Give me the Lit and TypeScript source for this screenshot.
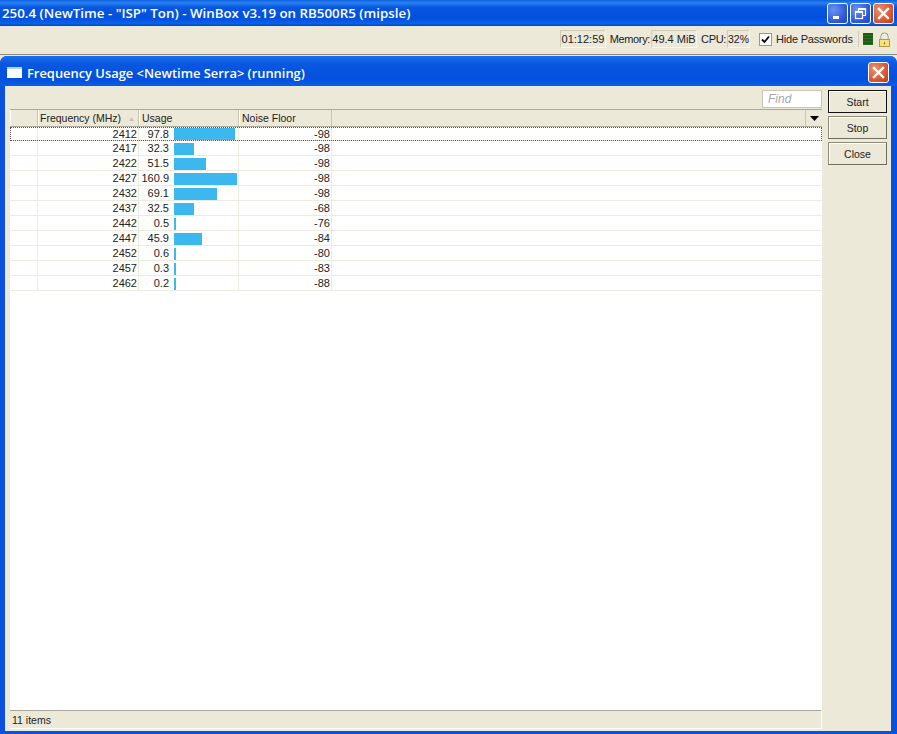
import { LitElement, html, css, svg } from "lit";
import { customElement } from "lit/decorators.js";

const ROWS: [string, string, number, string][] = [
  ["2412", "97.8", 61, "-98"],
  ["2417", "32.3", 20, "-98"],
  ["2422", "51.5", 32, "-98"],
  ["2427", "160.9", 63, "-98"],
  ["2432", "69.1", 43, "-98"],
  ["2437", "32.5", 20, "-68"],
  ["2442", "0.5", 2, "-76"],
  ["2447", "45.9", 28, "-84"],
  ["2452", "0.6", 2, "-80"],
  ["2457", "0.3", 2, "-83"],
  ["2462", "0.2", 2, "-88"],
];

const xIcon = svg`<svg width="13" height="13" viewBox="0 0 13 13"><path d="M2 2 L11 11 M11 2 L2 11" stroke="#fff" stroke-width="2.4" stroke-linecap="square"/></svg>`;

@customElement("app-root")
export class AppRoot extends LitElement {
  static styles = css`
    :host { display: flex; flex-direction: column; width: 897px; height: 734px; overflow: hidden; background: #ece9d8; font-family: "Liberation Sans", Arial, sans-serif; font-size: 11px; color: #222; }
    .main-title { height: 26px; flex: none; display: flex; align-items: center; padding: 0 0 0 2px; background: linear-gradient(#0a5fe0 0%, #2a80f0 10%, #0656e0 30%, #0350dc 70%, #0a62ec 90%, #0348c0 100%); color: #fff; font-family: "Open Sans", sans-serif; font-weight: 600; font-size: 13.34px; white-space: pre; }
    .main-title .t { flex: 1; }
    .wbtns { display: flex; gap: 2px; padding-right: 3px; }
    .wb { width: 21px; height: 21px; box-sizing: border-box; border: 1px solid #fff; border-radius: 3px; display: flex; align-items: center; justify-content: center; background: radial-gradient(circle at 30% 30%, #6a93ee, #2a55d8 70%, #2448b8); }
    .wb.close { background: radial-gradient(circle at 30% 30%, #eb8f6e, #d5502a 70%, #b53a18); }
    .toolbar { height: 29px; flex: none; display: flex; align-items: center; justify-content: flex-end; padding: 0 6px 2px 0; box-sizing: border-box; border-bottom: 1px solid #8f8c7c; font-size: 11px; }
    .tf { height: 18px; box-sizing: border-box; border: 1px solid #cfccb8; border-right-color: #f8f7f0; border-bottom-color: #f8f7f0; display: flex; align-items: center; justify-content: center; white-space: nowrap; }
    .w46 { width: 46px; }
    .w23 { width: 23px; font-size: 10.5px; }
    .lbl { text-align: right; padding-right: 1px; box-sizing: border-box; letter-spacing: -0.35px; white-space: nowrap; }
    .lbl.mem { width: 45px; }
    .lbl.cpu { width: 30px; }
    .check { width: 13px; height: 13px; margin: 0 4px 0 9px; border: 1px solid #8a9aa8; background: #fff; box-sizing: border-box; display: flex; align-items: center; justify-content: center; }
    .hide { width: 76px; margin-right: 6px; letter-spacing: -0.2px; white-space: nowrap; }
    .sep { width: 1px; height: 16px; background: #cfccb8; margin-right: 4px; }
    .green { width: 10px; height: 12px; margin-right: 5px; background: repeating-linear-gradient(#1e5c14 0 2px, #2a6f1e 2px 3px); }
    .win { flex: 1; min-height: 0; margin-top: 1px; display: flex; flex-direction: column; background: #0a50dc; border-radius: 7px 7px 0 0; padding: 0 6px 3px 5px; }
    .win-title { height: 30px; flex: none; box-sizing: border-box; display: flex; align-items: center; color: #fff; font-family: "Open Sans", sans-serif; font-weight: 600; font-size: 12.9px; background: linear-gradient(#1a70ee 0%, #0a58e0 25%, #0350dc 75%, #0a5ce6 100%); margin: 0 -6px 0 -5px; padding: 3px 8px 0 7px; border-radius: 7px 7px 0 0; }
    .win-icon { width: 15px; height: 11px; background: #fff; border-top: 2px solid #b8d0f4; box-sizing: border-box; margin-right: 5px; }
    .win-title .t { flex: 1; }
    .body { flex: 1; min-height: 0; display: flex; background: #ece9d8; padding: 4px 4px 2px 5px; gap: 6px; }
    .left { flex: 1; min-width: 0; display: flex; flex-direction: column; }
    .findrow { height: 19px; flex: none; display: flex; justify-content: flex-end; }
    .find { width: 60px; height: 18px; box-sizing: border-box; background: #fff; border: 1px solid #c8c5b2; color: #a8a8a8; font-style: italic; font-size: 12px; padding-left: 5px; display: flex; align-items: center; }
    .head { height: 16px; flex: none; display: flex; border-top: 1px solid #aca899; border-bottom: 1px solid #aca899; box-sizing: content-box; font-size: 10.5px; }
    .hc { box-sizing: border-box; border-right: 1px solid #c9c6b4; border-left: 1px solid #fff; padding-left: 2px; display: flex; align-items: center; white-space: nowrap; }
    .c0 { width: 28px; flex: none; }
    .c1 { width: 101px; flex: none; }
    .c2 { width: 100px; flex: none; }
    .c3 { width: 93px; flex: none; }
    .c4 { flex: 1; }
    .hc.c1 { justify-content: space-between; padding: 0 3px 0 1px; }
    .tri { color: #c4c1b2; font-size: 7px; }
    .dd { width: 17px; flex: none; box-sizing: border-box; display: flex; align-items: center; justify-content: center; border-left: 1px solid #c9c6b4; }
    .list { flex: 1; min-height: 0; background: #fff; display: flex; flex-direction: column; }
    .row { height: 15px; flex: none; display: flex; box-sizing: border-box; border-bottom: 1px solid #ecebdc; }
    .row.sel { height: 14px; outline: 1px dotted #555; outline-offset: -1px; }
    .cell { box-sizing: border-box; border-right: 1px solid #ecebdc; display: flex; align-items: center; justify-content: flex-end; padding-right: 1px; line-height: 14px; font-size: 11px; }
    .cell.c2 { justify-content: flex-start; padding: 0; }
    .val { width: 30px; text-align: right; margin-right: 5px; flex: none; }
    .bar { height: 12px; background: #3db8ee; flex: none; align-self: flex-end; }
    .status { height: 19px; flex: none; background: #ece9d8; border-top: 1px solid #aca899; border-right: 1px solid #fff; border-bottom: 1px solid #fff; display: flex; align-items: center; padding-left: 2px; box-sizing: border-box; font-size: 10.5px; }
    .side { width: 59px; flex: none; display: flex; flex-direction: column; gap: 3px; }
    .btn { height: 23px; box-sizing: border-box; border: 1px solid #8f8c7c; border-right-color: #6f6c60; border-bottom-color: #6f6c60; box-shadow: inset 1px 1px 0 #fff; display: flex; align-items: center; justify-content: center; font-size: 10.5px; }
    .btn.def { border: 1px solid #111; }
  `;

  render() {
    return html`
      <div class="main-title">
        <span class="t">250.4 (NewTime - "ISP" Ton) - WinBox v3.19 on RB500R5 (mipsle)</span>
        <div class="wbtns">
          <div class="wb"><svg width="13" height="13" viewBox="0 0 13 13"><rect x="2" y="9" width="6" height="3" fill="#fff"/></svg></div>
          <div class="wb"><svg width="13" height="13" viewBox="0 0 13 13" fill="none" stroke="#fff" stroke-width="1.2"><rect x="1.5" y="4.5" width="7" height="7"/><path d="M4.5 4.5 V1.5 H11.5 V8.5 H8.5" /><path d="M1.5 5 H8.5 M4.5 2 H11.5" stroke-width="2"/></svg></div>
          <div class="wb close">${xIcon}</div>
        </div>
      </div>
      <div class="toolbar">
        <div class="tf w46">01:12:59</div>
        <span class="lbl mem">Memory:</span><div class="tf w46">49.4 MiB</div>
        <span class="lbl cpu">CPU:</span><div class="tf w23">32%</div>
        <div class="check"><svg width="9" height="9" viewBox="0 0 9 9"><path d="M1 4.5 L3.5 7 L8 1.5" fill="none" stroke="#000" stroke-width="1.8"/></svg></div>
        <span class="hide">Hide Passwords</span>
        <div class="sep"></div>
        <div class="green"></div>
        <svg width="13" height="15" viewBox="0 0 13 15"><path d="M3 7 V4.5 a3.5 3.5 0 0 1 7 0 V7" fill="none" stroke="#8f8f78" stroke-width="1"/><path d="M4 7 V4.5 a2.5 2.5 0 0 1 5 0 V7" fill="none" stroke="#f4f2e4" stroke-width="1"/><rect x="1.5" y="7.5" width="10" height="7" fill="#f6e27a" stroke="#b89c3c" stroke-width="1"/><rect x="6" y="10" width="1" height="2.5" fill="#8a7428"/></svg>
      </div>
      <div class="win">
        <div class="win-title">
          <div class="win-icon"></div>
          <span class="t">Frequency Usage &lt;Newtime Serra&gt; (running)</span>
          <div class="wb close">${xIcon}</div>
        </div>
        <div class="body">
          <div class="left">
            <div class="findrow"><div class="find">Find</div></div>
            <div class="head">
              <div class="hc c0"></div>
              <div class="hc c1"><span>Frequency (MHz)</span><span class="tri">▲</span></div>
              <div class="hc c2">Usage</div>
              <div class="hc c3">Noise Floor</div>
              <div class="c4"></div>
              <div class="dd"><svg width="9" height="5" viewBox="0 0 9 5"><path d="M0 0 H9 L4.5 5 Z" fill="#000"/></svg></div>
            </div>
            <div class="list">
              ${ROWS.map(
                (r, i) => html`<div class="row ${i === 0 ? "sel" : ""}">
                  <div class="cell c0"></div>
                  <div class="cell c1">${r[0]}</div>
                  <div class="cell c2"><span class="val">${r[1]}</span><div class="bar" style="width:${r[2]}px"></div></div>
                  <div class="cell c3">${r[3]}</div>
                  <div class="c4"></div>
                </div>`
              )}
            </div>
            <div class="status">11 items</div>
          </div>
          <div class="side">
            <div class="btn def">Start</div>
            <div class="btn">Stop</div>
            <div class="btn">Close</div>
          </div>
        </div>
      </div>
    `;
  }
}
